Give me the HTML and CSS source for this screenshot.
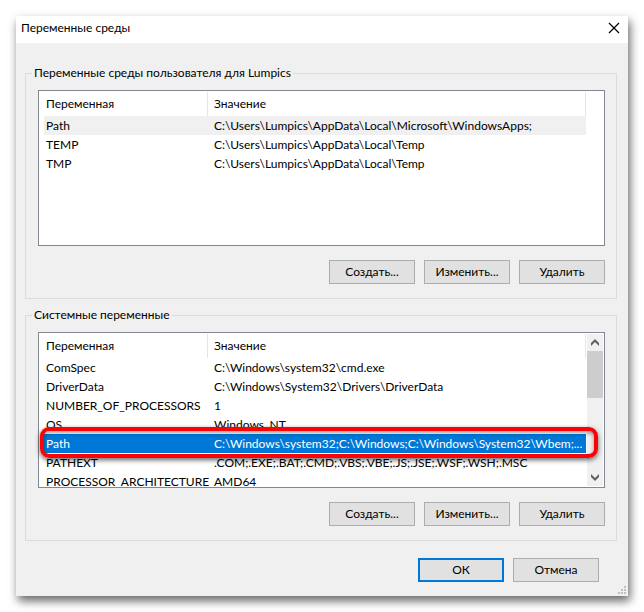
FILE: index.html
```html
<!DOCTYPE html>
<html lang="ru">
<head>
<meta charset="utf-8">
<title>Переменные среды</title>
<link rel="stylesheet" href="styles.css">
</head>
<body>
<main class="dialog">
  <header class="titlebar">
    <h1 class="title">Переменные среды</h1>
    <button class="close" type="button" aria-label="Закрыть">
      <svg width="12" height="12" viewBox="0 0 12 12"><path d="M1 1L11 11M11 1L1 11" fill="none" stroke="#000" stroke-width="1.2"/></svg>
    </button>
  </header>
  <form class="content">
    <fieldset class="group">
      <legend>Переменные среды пользователя для Lumpics</legend>
      <div class="list">
        <table>
          <thead><tr><th class="name">Переменная</th><th>Значение</th></tr></thead>
          <tbody>
            <tr class="inactive"><td>Path</td><td>C:\Users\Lumpics\AppData\Local\Microsoft\WindowsApps;</td></tr>
            <tr><td>TEMP</td><td>C:\Users\Lumpics\AppData\Local\Temp</td></tr>
            <tr><td>TMP</td><td>C:\Users\Lumpics\AppData\Local\Temp</td></tr>
          </tbody>
        </table>
      </div>
      <div class="actions">
        <button class="btn" type="button">Создать...</button>
        <button class="btn" type="button">Изменить...</button>
        <button class="btn" type="button">Удалить</button>
      </div>
    </fieldset>
    <fieldset class="group">
      <legend>Системные переменные</legend>
      <div class="list">
        <table>
          <thead><tr><th class="name">Переменная</th><th>Значение</th></tr></thead>
          <tbody>
            <tr><td>ComSpec</td><td>C:\Windows\system32\cmd.exe</td></tr>
            <tr><td>DriverData</td><td>C:\Windows\System32\Drivers\DriverData</td></tr>
            <tr><td>NUMBER_OF_PROCESSORS</td><td>1</td></tr>
            <tr><td>OS</td><td>Windows_NT</td></tr>
            <tr class="selected"><td>Path</td><td>C:\Windows\system32;C:\Windows;C:\Windows\System32\Wbem;...</td></tr>
            <tr><td>PATHEXT</td><td>.COM;.EXE;.BAT;.CMD;.VBS;.VBE;.JS;.JSE;.WSF;.WSH;.MSC</td></tr>
            <tr><td>PROCESSOR_ARCHITECTURE</td><td>AMD64</td></tr>
          </tbody>
        </table>
        <div class="scrollbar">
          <button class="arrow" type="button" aria-label="Вверх">
            <svg width="8" height="7" viewBox="0 0 8 7"><path d="M0 4L4 0L8 4V7L4 3L0 7Z" fill="#606060"/></svg>
          </button>
          <div class="thumb"></div>
          <button class="arrow last" type="button" aria-label="Вниз">
            <svg width="8" height="7" viewBox="0 0 8 7"><path d="M0 0L4 4L8 0V3L4 7L0 3Z" fill="#606060"/></svg>
          </button>
        </div>
        <div class="marker"></div>
      </div>
      <div class="actions">
        <button class="btn" type="button">Создать...</button>
        <button class="btn" type="button">Изменить...</button>
        <button class="btn" type="button">Удалить</button>
      </div>
    </fieldset>
    <footer class="footer">
      <button class="btn default" type="submit">ОК</button>
      <button class="btn" type="button">Отмена</button>
    </footer>
  </form>
  <svg class="grip" width="8" height="8" viewBox="0 0 8 8"><path d="M6 0h2v2h-2zM3 3h2v2h-2zM6 3h2v2h-2zM0 6h2v2h-2zM3 6h2v2h-2zM6 6h2v2h-2z" fill="#bfbfbf"/></svg>
</main>
</body>
</html>
```
FILE: styles.css
```css
* {
  box-sizing: border-box;
}

body {
  margin: 0;
  padding: 16px;
  background: #fff;
  color: #000;
  font: 12px/18px Lato, "Noto Sans", sans-serif;
}

button {
  font: inherit;
  color: inherit;
  padding: 0;
}

.dialog {
  position: relative;
  background: #f0f0f0;
  box-shadow: 2px 5px 9px rgba(0, 0, 0, 0.6);
}

.titlebar {
  display: flex;
  justify-content: space-between;
  align-items: center;
  height: 27px;
  padding: 0 8px 4px 5px;
  background: #fff;
}

.title {
  margin: 0;
  font-size: 12px;
  font-weight: 400;
}

.close {
  display: flex;
  border: 0;
  background: none;
}

.content {
  display: flex;
  flex-direction: column;
  gap: 7px;
  padding: 21px 11px 14px 9px;
}

.group {
  min-width: 0;
  margin: 0;
  padding: 8px 11px 14px 12px;
  border: 1px solid #dcdcdc;
}

legend {
  margin-left: -6px;
  padding: 0 2px;
}

.list {
  position: relative;
  display: flex;
  height: 156px;
  padding: 1px 1px 1px 5px;
  border: 1px solid #828790;
  background: #fff;
}

table {
  flex: 1;
  min-width: 0;
  display: block;
  margin-right: 17px;
  overflow: hidden;
}

thead,
tbody {
  display: block;
}

tr {
  display: grid;
  grid-template-columns: 164px 1fr;
}

th,
td {
  padding: 0 0 0 6px;
  line-height: 19px;
  text-align: left;
  font-weight: 400;
  white-space: nowrap;
}

th {
  line-height: 24px;
  border-right: 1px solid #e5e5e5;
}

th:first-child,
td:first-child {
  padding-left: 2px;
}

.inactive {
  background: #f0f0f0;
}

.selected {
  background: #0078d7;
  color: #fff;
}

.scrollbar {
  display: flex;
  flex-direction: column;
  width: 16px;
  margin-left: -16px;
  background: #f0f0f0;
}

.arrow {
  display: flex;
  justify-content: center;
  align-items: center;
  height: 17px;
  border: 0;
  background: none;
}

.last {
  margin-top: auto;
}

.thumb {
  height: 47px;
  background: #cdcdcd;
}

.marker {
  position: absolute;
  top: 94px;
  left: 1px;
  right: 6px;
  height: 31px;
  border: 4px solid #fb0207;
  border-radius: 9px;
  box-shadow: 0 2px 5px rgba(0, 0, 0, 0.6), inset 0 2px 4px rgba(0, 0, 0, 0.4);
}

.actions,
.footer {
  display: flex;
  justify-content: flex-end;
  gap: 9px;
}

.actions {
  margin-top: 14px;
}

.footer {
  margin-top: 10px;
  padding-right: 18px;
}

.btn {
  width: 86px;
  height: 24px;
  border: 1px solid #adadad;
  background: #e1e1e1;
}

.default {
  border: 2px solid #0078d7;
}

.grip {
  position: absolute;
  right: 2px;
  bottom: 2px;
}
```
